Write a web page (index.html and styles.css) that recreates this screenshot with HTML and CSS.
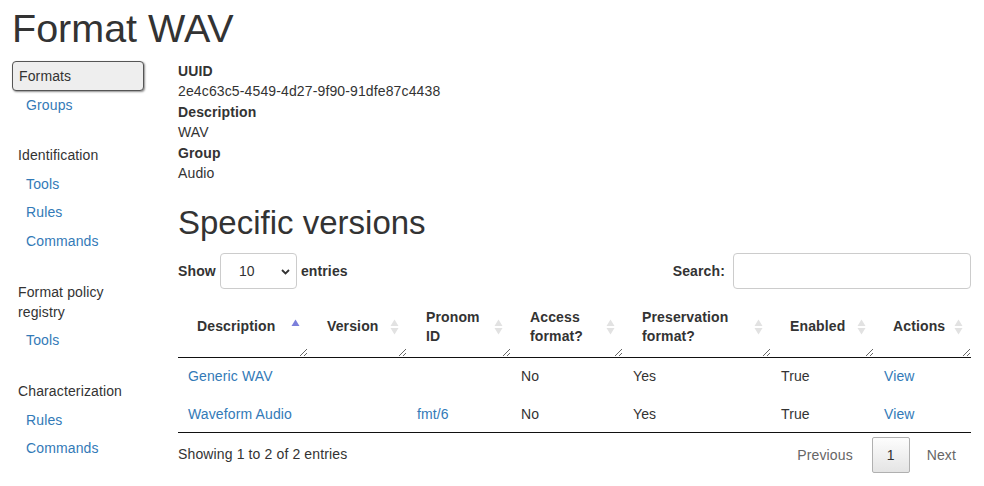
FILE: index.html
```html
<!DOCTYPE html>
<html lang="en">
<head>
<meta charset="utf-8">
<title>Format WAV</title>
<link rel="stylesheet" href="styles.css">
</head>
<body>
<h1 class="page-title">Format WAV</h1>
<div class="layout">
  <nav class="sidebar">
    <a class="nav-item active">Formats</a>
    <a class="nav-link">Groups</a>
    <div class="nav-heading">Identification</div>
    <a class="nav-link">Tools</a>
    <a class="nav-link">Rules</a>
    <a class="nav-link">Commands</a>
    <div class="nav-heading">Format policy registry</div>
    <a class="nav-link">Tools</a>
    <div class="nav-heading">Characterization</div>
    <a class="nav-link">Rules</a>
    <a class="nav-link">Commands</a>
  </nav>
  <main class="content">
    <dl class="meta">
      <dt>UUID</dt>
      <dd>2e4c63c5-4549-4d27-9f90-91dfe87c4438</dd>
      <dt>Description</dt>
      <dd>WAV</dd>
      <dt>Group</dt>
      <dd>Audio</dd>
    </dl>
    <h2 class="section-title">Specific versions</h2>
    <div class="dt-top">
      <label class="dt-length">Show <span class="select-wrap"><select class="dt-select"><option>10</option><option>25</option><option>50</option><option>100</option></select><svg class="chev" width="9" height="6" viewBox="0 0 9 6"><path d="M1 1 L4.5 4.5 L8 1" fill="none" stroke="#333" stroke-width="1.8"/></svg></span> entries</label>
      <label class="dt-search">Search:<input class="dt-input" type="search"></label>
    </div>
    <table class="dt">
      <colgroup>
        <col style="width:130px"><col style="width:99px"><col style="width:104px"><col style="width:112px"><col style="width:148px"><col style="width:103px"><col style="width:97px">
      </colgroup>
      <thead>
        <tr>
          <th><div class="th-in">Description<svg class="sort" width="9" height="18" viewBox="0 0 9 18"><path d="M0.5 8 L4.5 1.5 L8.5 8 Z" fill="#7b7fdb"/></svg></div></th>
          <th><div class="th-in">Version<svg class="sort" width="9" height="18" viewBox="0 0 9 18"><path d="M0.5 8 L4.5 1.5 L8.5 8 Z M0.5 10 L4.5 16.5 L8.5 10 Z" fill="#e2e2e2"/></svg></div></th>
          <th><div class="th-in">Pronom ID<svg class="sort" width="9" height="18" viewBox="0 0 9 18"><path d="M0.5 8 L4.5 1.5 L8.5 8 Z M0.5 10 L4.5 16.5 L8.5 10 Z" fill="#e2e2e2"/></svg></div></th>
          <th><div class="th-in">Access format?<svg class="sort" width="9" height="18" viewBox="0 0 9 18"><path d="M0.5 8 L4.5 1.5 L8.5 8 Z M0.5 10 L4.5 16.5 L8.5 10 Z" fill="#e2e2e2"/></svg></div></th>
          <th><div class="th-in">Preservation format?<svg class="sort" width="9" height="18" viewBox="0 0 9 18"><path d="M0.5 8 L4.5 1.5 L8.5 8 Z M0.5 10 L4.5 16.5 L8.5 10 Z" fill="#e2e2e2"/></svg></div></th>
          <th><div class="th-in">Enabled<svg class="sort" width="9" height="18" viewBox="0 0 9 18"><path d="M0.5 8 L4.5 1.5 L8.5 8 Z M0.5 10 L4.5 16.5 L8.5 10 Z" fill="#e2e2e2"/></svg></div></th>
          <th><div class="th-in">Actions<svg class="sort" width="9" height="18" viewBox="0 0 9 18"><path d="M0.5 8 L4.5 1.5 L8.5 8 Z M0.5 10 L4.5 16.5 L8.5 10 Z" fill="#e2e2e2"/></svg></div></th>
        </tr>
      </thead>
      <tbody>
        <tr>
          <td><a class="link">Generic WAV</a></td>
          <td></td>
          <td></td>
          <td>No</td>
          <td>Yes</td>
          <td>True</td>
          <td><a class="link">View</a></td>
        </tr>
        <tr>
          <td><a class="link">Waveform Audio</a></td>
          <td></td>
          <td><a class="link">fmt/6</a></td>
          <td>No</td>
          <td>Yes</td>
          <td>True</td>
          <td><a class="link">View</a></td>
        </tr>
      </tbody>
    </table>
    <div class="dt-bottom">
      <div class="dt-info">Showing 1 to 2 of 2 entries</div>
      <div class="dt-paginate">
        <a class="page-btn disabled prev">Previous</a>
        <a class="page-btn current">1</a>
        <a class="page-btn disabled">Next</a>
      </div>
    </div>
  </main>
</div>
</body>
</html>
```
FILE: styles.css
```css
* { box-sizing: border-box; }
html, body {
  margin: 0;
  padding: 0;
  background: #fff;
}
body {
  padding: 0 12px;
  font-family: "Liberation Sans", Arial, sans-serif;
  font-size: 14px;
  line-height: 20px;
  letter-spacing: 0.13px;
  color: #333;
}
.page-title {
  margin: 7px 0 11px;
  font-size: 39.5px;
  line-height: 43px;
  font-weight: normal;
  letter-spacing: 0;
  color: #333;
}
.layout {
  display: grid;
  grid-template-columns: 132px 793px;
  column-gap: 34px;
  align-items: start;
}
.sidebar {
  display: flex;
  flex-direction: column;
}
.nav-item {
  display: block;
  padding: 4px 6px;
  border: 1px solid #555;
  border-radius: 4px;
  background: #eee;
  box-shadow: 1px 1px 2px rgba(0,0,0,0.45);
  color: #333;
  line-height: 20px;
}
.nav-link {
  display: block;
  padding: 4.25px 14px;
  color: #337ab7;
  line-height: 20px;
}
.nav-heading {
  padding: 4.5px 6px;
  margin-top: 21px;
  color: #333;
}
.nav-heading ~ .nav-heading {
  margin-top: 22px;
}
.content {
  min-width: 0;
}
.meta {
  margin: 0;
  line-height: 20.4px;
}
.meta dt { font-weight: bold; }
.meta dd { margin: 0; }
.section-title {
  margin: 22px 0 12px;
  font-size: 33px;
  line-height: 36px;
  font-weight: normal;
  letter-spacing: 0;
  color: #333;
}
.dt-top {
  display: flex;
  justify-content: space-between;
  align-items: center;
  height: 36px;
}
.dt-length, .dt-search {
  font-weight: bold;
  display: flex;
  align-items: center;
  white-space: pre;
}
.select-wrap {
  position: relative;
  display: inline-block;
}
.dt-select {
  -webkit-appearance: none;
  appearance: none;
  width: 77px;
  height: 36px;
  padding: 0 0 0 18px;
  border: 1px solid #ccc;
  border-radius: 4px;
  background: #fff;
  font-family: inherit;
  font-size: 14px;
  color: #333;
  margin: 0;
  display: block;
}
.chev {
  position: absolute;
  right: 7px;
  top: 16px;
}
.dt-input {
  width: 238px;
  height: 36px;
  margin-left: 8px;
  border: 1px solid #ccc;
  border-radius: 4px;
  background: #fff;
  font-family: inherit;
  font-size: 14px;
  padding: 4px 6px;
}
.dt {
  width: 793px;
  margin-top: 8px;
  border-collapse: collapse;
  border-spacing: 0;
  table-layout: fixed;
  border-bottom: 1px solid #111;
}
.dt th {
  padding: 0;
  text-align: left;
  font-weight: bold;
  vertical-align: middle;
  border-bottom: 1px solid #111;
  height: 60px;
}
.th-in {
  position: relative;
  height: 60px;
  display: flex;
  align-items: center;
  padding: 0 18px 1px 19px;
  resize: horizontal;
  overflow: hidden;
  line-height: 19px;
}
.sort {
  position: absolute;
  right: 8px;
  top: 21px;
}
.dt td {
  padding: 8px 10px 9px;
  line-height: 20px;
  vertical-align: middle;
}
.dt tbody tr + tr td {
  padding-top: 8.5px;
  padding-bottom: 8.5px;
}
.link {
  color: #337ab7;
  text-decoration: none;
}
.dt-bottom {
  display: flex;
  justify-content: space-between;
  align-items: flex-start;
}
.dt-info {
  padding-top: 11px;
}
.dt-paginate {
  padding-top: 4px;
  display: flex;
  gap: 2px;
}
.page-btn {
  display: block;
  padding: 7px 14px;
  border: 1px solid transparent;
  border-radius: 2px;
  color: #666;
  line-height: 20px;
}
.page-btn.prev {
  margin-right: 2px;
}
.page-btn.current {
  color: #333;
  border: 1px solid #b0b0b0;
  background: linear-gradient(to bottom, #fdfdfd 0%, #e4e4e4 100%);
}
```
